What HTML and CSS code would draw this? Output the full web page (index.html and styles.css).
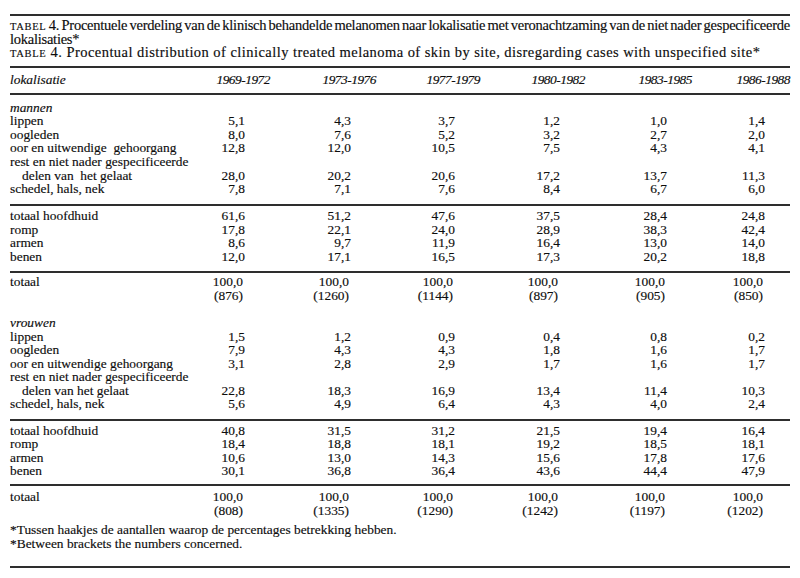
FILE: index.html
```html
<!DOCTYPE html>
<html lang="nl">
<head>
<meta charset="utf-8">
<title>Tabel 4</title>
<link rel="stylesheet" href="styles.css">
</head>
<body>
<div class="page">
  <div class="caption">
    <p class="cap-nl"><span class="line-full"><span class="sc">TABEL</span> 4. Procentuele verdeling van de klinisch behandelde melanomen naar lokalisatie met veronachtzaming van de niet nader gespecificeerde</span> lokalisaties*</p>
    <p class="cap-en"><span class="sc">TABLE</span> 4. Procentual distribution of clinically treated melanoma of skin by site, disregarding cases with unspecified site*</p>
  </div>

  <div class="section head">
    <div class="row"><span class="label it">lokalisatie</span><span class="yr">1969-1972</span><span class="yr">1973-1976</span><span class="yr">1977-1979</span><span class="yr">1980-1982</span><span class="yr">1983-1985</span><span class="yr">1986-1988</span></div>
  </div>

  <div class="section group">
    <div class="row"><span class="label it">mannen</span></div>
    <div class="row"><span class="label">lippen</span><span class="num">5,1</span><span class="num">4,3</span><span class="num">3,7</span><span class="num">1,2</span><span class="num">1,0</span><span class="num">1,4</span></div>
    <div class="row"><span class="label">oogleden</span><span class="num">8,0</span><span class="num">7,6</span><span class="num">5,2</span><span class="num">3,2</span><span class="num">2,7</span><span class="num">2,0</span></div>
    <div class="row"><span class="label">oor en uitwendige&nbsp; gehoorgang</span><span class="num">12,8</span><span class="num">12,0</span><span class="num">10,5</span><span class="num">7,5</span><span class="num">4,3</span><span class="num">4,1</span></div>
    <div class="row"><span class="label">rest en niet nader gespecificeerde</span></div>
    <div class="row"><span class="label indent">delen van&nbsp; het gelaat</span><span class="num">28,0</span><span class="num">20,2</span><span class="num">20,6</span><span class="num">17,2</span><span class="num">13,7</span><span class="num">11,3</span></div>
    <div class="row"><span class="label">schedel, hals, nek</span><span class="num">7,8</span><span class="num">7,1</span><span class="num">7,6</span><span class="num">8,4</span><span class="num">6,7</span><span class="num">6,0</span></div>
  </div>

  <div class="section totals">
    <div class="row"><span class="label">totaal hoofdhuid</span><span class="num">61,6</span><span class="num">51,2</span><span class="num">47,6</span><span class="num">37,5</span><span class="num">28,4</span><span class="num">24,8</span></div>
    <div class="row"><span class="label">romp</span><span class="num">17,8</span><span class="num">22,1</span><span class="num">24,0</span><span class="num">28,9</span><span class="num">38,3</span><span class="num">42,4</span></div>
    <div class="row"><span class="label">armen</span><span class="num">8,6</span><span class="num">9,7</span><span class="num">11,9</span><span class="num">16,4</span><span class="num">13,0</span><span class="num">14,0</span></div>
    <div class="row"><span class="label">benen</span><span class="num">12,0</span><span class="num">17,1</span><span class="num">16,5</span><span class="num">17,3</span><span class="num">20,2</span><span class="num">18,8</span></div>
  </div>

  <div class="section sum sum-men">
    <div class="row"><span class="label">totaal</span><span class="num tot">100,0</span><span class="num tot">100,0</span><span class="num tot">100,0</span><span class="num tot">100,0</span><span class="num tot">100,0</span><span class="num tot">100,0</span></div>
    <div class="row"><span class="label"></span><span class="num tot">(876)</span><span class="num tot">(1260)</span><span class="num tot">(1144)</span><span class="num tot">(897)</span><span class="num tot">(905)</span><span class="num tot">(850)</span></div>
  </div>

  <div class="section group women">
    <div class="row"><span class="label it">vrouwen</span></div>
    <div class="row"><span class="label">lippen</span><span class="num">1,5</span><span class="num">1,2</span><span class="num">0,9</span><span class="num">0,4</span><span class="num">0,8</span><span class="num">0,2</span></div>
    <div class="row"><span class="label">oogleden</span><span class="num">7,9</span><span class="num">4,3</span><span class="num">4,3</span><span class="num">1,8</span><span class="num">1,6</span><span class="num">1,7</span></div>
    <div class="row"><span class="label">oor en uitwendige gehoorgang</span><span class="num">3,1</span><span class="num">2,8</span><span class="num">2,9</span><span class="num">1,7</span><span class="num">1,6</span><span class="num">1,7</span></div>
    <div class="row"><span class="label">rest en niet nader gespecificeerde</span></div>
    <div class="row"><span class="label indent">delen van het gelaat</span><span class="num">22,8</span><span class="num">18,3</span><span class="num">16,9</span><span class="num">13,4</span><span class="num">11,4</span><span class="num">10,3</span></div>
    <div class="row"><span class="label">schedel, hals, nek</span><span class="num">5,6</span><span class="num">4,9</span><span class="num">6,4</span><span class="num">4,3</span><span class="num">4,0</span><span class="num">2,4</span></div>
  </div>

  <div class="section totals totals-women">
    <div class="row"><span class="label">totaal hoofdhuid</span><span class="num">40,8</span><span class="num">31,5</span><span class="num">31,2</span><span class="num">21,5</span><span class="num">19,4</span><span class="num">16,4</span></div>
    <div class="row"><span class="label">romp</span><span class="num">18,4</span><span class="num">18,8</span><span class="num">18,1</span><span class="num">19,2</span><span class="num">18,5</span><span class="num">18,1</span></div>
    <div class="row"><span class="label">armen</span><span class="num">10,6</span><span class="num">13,0</span><span class="num">14,3</span><span class="num">15,6</span><span class="num">17,8</span><span class="num">17,6</span></div>
    <div class="row"><span class="label">benen</span><span class="num">30,1</span><span class="num">36,8</span><span class="num">36,4</span><span class="num">43,6</span><span class="num">44,4</span><span class="num">47,9</span></div>
  </div>

  <div class="section sum sum-women">
    <div class="row"><span class="label">totaal</span><span class="num tot">100,0</span><span class="num tot">100,0</span><span class="num tot">100,0</span><span class="num tot">100,0</span><span class="num tot">100,0</span><span class="num tot">100,0</span></div>
    <div class="row"><span class="label"></span><span class="num tot">(808)</span><span class="num tot">(1335)</span><span class="num tot">(1290)</span><span class="num tot">(1242)</span><span class="num tot">(1197)</span><span class="num tot">(1202)</span></div>
    <div class="notes">
      <p>*Tussen haakjes de aantallen waarop de percentages betrekking hebben.</p>
      <p>*Between brackets the numbers concerned.</p>
    </div>
  </div>
</div>
</body>
</html>
```

FILE: styles.css
```css
html, body {
  margin: 0;
  padding: 0;
  background: #ffffff;
}

body {
  font-family: "Liberation Serif", "Times New Roman", serif;
  font-size: 13.4px;
  color: #0d0d0d;
  -webkit-text-stroke: 0.15px #0d0d0d;
}

.page {
  width: 780px;
  padding: 14px 10px 0 10px;
}

.caption {
  border-top: 2px solid #2e2e2e;
  border-bottom: 2px solid #2e2e2e;
  padding: 3px 0 6px 0;
  font-size: 14.5px;
  line-height: 13.5px;
}

.caption p {
  margin: 0;
}

.cap-nl {
  letter-spacing: -0.25px;
  word-spacing: -2px;
}

.cap-en {
  letter-spacing: 0.45px;
}

.line-full {
  display: block;
  text-align: justify;
  text-align-last: justify;
  white-space: nowrap;
}

.sc {
  font-size: 10.5px;
  line-height: 0;
  letter-spacing: 0.7px;
}

.section {
  border-bottom: 2px solid #2e2e2e;
  line-height: 13.6px;
}

.head {
  padding: 5.5px 0 6px 0;
}

.group {
  padding: 6px 0 8px 0;
}

.totals {
  padding: 3.5px 0 7px 0;
}

.totals-women {
  padding: 2.5px 0 6.5px 0;
}

.sum-men {
  border-bottom: none;
  padding: 2.5px 0 13.6px 0;
}

.women {
  padding-top: 0;
}

.sum-women {
  padding: 4px 0 15.5px 0;
}

.row {
  display: grid;
  grid-template-columns: 182px 78px 106px 104px 105px 107px 98px;
}

.label {
  white-space: nowrap;
}

.indent {
  padding-left: 12px;
}

.it {
  font-style: italic;
}

.yr {
  font-style: italic;
  text-align: right;
  letter-spacing: -0.5px;
}

.num {
  text-align: right;
  padding-right: 25px;
}

.num.tot {
  padding-right: 27px;
}

.notes {
  margin-top: 5.8px;
}

.notes p {
  margin: 0;
}
```
